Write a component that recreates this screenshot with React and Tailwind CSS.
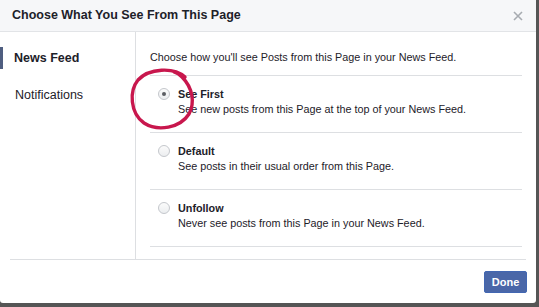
const options = [
  { id: "first", title: "See First", desc: "See new posts from this Page at the top of your News Feed.", checked: true },
  { id: "default", title: "Default", desc: "See posts in their usual order from this Page." },
  { id: "unfollow", title: "Unfollow", desc: "Never see posts from this Page in your News Feed." },
];

function Radio({ checked }) {
  return (
    <span className="mt-[1px] flex h-[12px] w-[12px] shrink-0 items-center justify-center rounded-full border border-[#c4c7cc] bg-gradient-to-b from-[#fbfbfb] to-[#eceef0]">
      {checked && <span className="h-[4px] w-[4px] rounded-full bg-[#5b5e63]" />}
    </span>
  );
}

function Scribble() {
  return (
    <svg
      className="pointer-events-none absolute left-[127px] top-[64px]"
      width="72"
      height="70"
      viewBox="0 0 72 70"
      fill="none"
    >
      <path
        d="M58 13 C47 3, 22 4, 11 16 C2 27, 3 49, 17 59 C31 68, 53 64, 62 50 C68 39, 66 24, 55 13 C53 11, 50 9, 47 8"
        stroke="#c8174d"
        strokeWidth="3.4"
        strokeLinecap="round"
      />
    </svg>
  );
}

export default function App() {
  return (
    <div className="h-[307px] w-[539px] bg-[#555555] font-['Liberation_Sans',Arial,sans-serif] text-[#1d2129]">
      <div className="relative flex h-[303px] w-[536px] flex-col rounded-b-[3px] bg-white">
        <div className="flex h-[32px] shrink-0 items-center justify-between border-b border-[#e2e4e7] bg-[#f6f7f9] pl-[12px] pr-[12px]">
          <span className="text-[12.5px] font-bold">Choose What You See From This Page</span>
          <svg width="10" height="10" viewBox="0 0 10 10" className="mr-[1px]">
            <path d="M1 1 L9 9 M9 1 L1 9" stroke="#a7abb1" strokeWidth="1.6" />
          </svg>
        </div>

        <div className="flex h-[227px] shrink-0">
          <div className="flex w-[136px] shrink-0 flex-col gap-[15px] border-r border-[#dddfe2] pt-[15px]">
            <div className="flex h-[22px] items-center border-l-[3px] border-[#4f5e80] pl-[11px] text-[12.5px] font-bold">
              News Feed
            </div>
            <div className="flex h-[22px] items-center pl-[15px] text-[12.5px]">Notifications</div>
          </div>

          <div className="flex flex-1 flex-col px-[14px] pt-[18px]">
            <div className="mb-[11px] text-[10.8px] leading-[14px]">
              Choose how you'll see Posts from this Page in your News Feed.
            </div>
            {options.map((o) => (
              <div key={o.id} className="flex gap-[8px] border-t border-[#dddfe2] pl-[8px] pt-[11px] pb-[16px]">
                <Radio checked={o.checked} />
                <div className="text-[10.8px] leading-[14px]">
                  <div className="font-bold">{o.title}</div>
                  <div className="mt-[1px]">{o.desc}</div>
                </div>
              </div>
            ))}
            <div className="border-t border-[#dddfe2]" />
          </div>
        </div>

        <div className="mx-[10px] border-t border-[#dddfe2]" />

        <div className="flex flex-1 items-start justify-end pr-[9px] pt-[11px]">
          <button className="h-[22px] w-[43px] rounded-[2px] border border-[#4267b2] bg-[#4a67a8] text-[11px] font-bold text-white">
            Done
          </button>
        </div>

        <Scribble />
      </div>
    </div>
  );
}
